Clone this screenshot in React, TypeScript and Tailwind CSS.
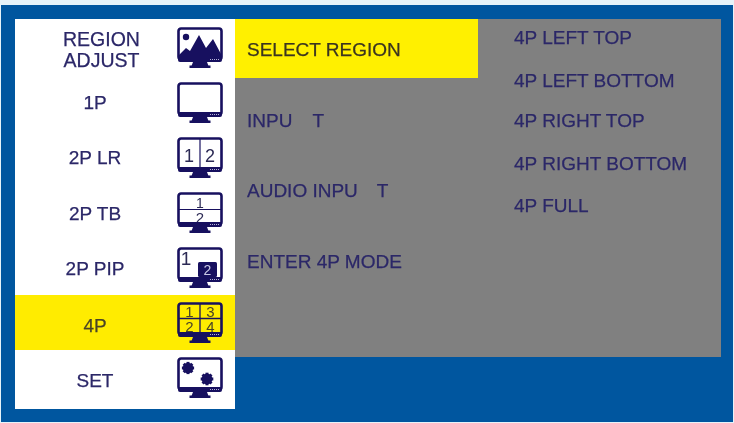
import type { ReactNode } from "react";

const NAVY = "#17105f";
const NUM = "fill-[#2c2a55]";

function Monitor({ children }: { children?: ReactNode }) {
  return (
    <svg width="46" height="42" viewBox="0 0 46 42" className="block shrink-0">
      <rect x="1.5" y="1.5" width="43" height="31" rx="2.5" fill="none" stroke={NAVY} strokeWidth="2.6" />
      {children}
      <rect x="1" y="30" width="44" height="5" rx="2" fill={NAVY} />
      <path d="M16 35h14l1.5 4h-17z" fill={NAVY} />
      <rect x="12.5" y="38.5" width="21" height="2.5" fill={NAVY} />
      <path d="M33 32.5h9" stroke="#c9c6e6" strokeWidth="0.9" strokeDasharray="1 1" />
    </svg>
  );
}

function Landscape() {
  return (
    <Monitor>
      <circle cx="9" cy="10" r="3.2" fill={NAVY} />
      <path d="M2 32 L2 28 L9 21 L13 24 L22 8 L29 21 L36 12 L44 27 L44 32 Z" fill={NAVY} />
    </Monitor>
  );
}
function TwoLR() {
  return (
    <Monitor>
      <path d="M23 2v29" stroke={NAVY} strokeWidth="1.2" />
      <text x="12" y="25" fontSize="18" textAnchor="middle" className={NUM}>1</text>
      <text x="33" y="25" fontSize="18" textAnchor="middle" className={NUM}>2</text>
    </Monitor>
  );
}
function TwoTB() {
  return (
    <Monitor>
      <path d="M2 17.5h42" stroke={NAVY} strokeWidth="1.2" />
      <text x="23" y="15.5" fontSize="14" textAnchor="middle" className={NUM}>1</text>
      <text x="23" y="30.5" fontSize="15" textAnchor="middle" className={NUM}>2</text>
    </Monitor>
  );
}
function Pip() {
  return (
    <Monitor>
      <text x="9" y="18" fontSize="19" textAnchor="middle" className={NUM}>1</text>
      <rect x="21" y="15" width="19" height="15" rx="1.5" fill={NAVY} />
      <text x="30.5" y="28" fontSize="14" textAnchor="middle" className="fill-[#c9c8e6]">2</text>
    </Monitor>
  );
}
function Quad() {
  return (
    <Monitor>
      <path d="M23 2v29M2 16.5h42" stroke={NAVY} strokeWidth="1.3" />
      <text x="12.5" y="15" fontSize="15" textAnchor="middle" className="fill-[#4a4426]">1</text>
      <text x="33.5" y="15" fontSize="15" textAnchor="middle" className="fill-[#4a4426]">3</text>
      <text x="12.5" y="30" fontSize="15" textAnchor="middle" className="fill-[#4a4426]">2</text>
      <text x="33.5" y="30" fontSize="15" textAnchor="middle" className="fill-[#4a4426]">4</text>
    </Monitor>
  );
}
function Gear({ cx, cy, r }: { cx: number; cy: number; r: number }) {
  return (
    <g fill={NAVY}>
      <circle cx={cx} cy={cy} r={r} />
      {[0, 45, 90, 135].map((a) => (
        <rect key={a} x={cx - r - 0.9} y={cy - 1.5} width={2 * r + 1.8} height="3" transform={`rotate(${a} ${cx} ${cy})`} />
      ))}
    </g>
  );
}
function Gears() {
  return (
    <Monitor>
      <Gear cx={11} cy={11} r={5.2} />
      <Gear cx={30} cy={22} r={5.4} />
    </Monitor>
  );
}

const MENU = [
  { label: <span className="pl-[13px] pt-[4px] text-[19.5px]">REGION<br />ADJUST</span>, icon: <Landscape /> },
  { label: "1P", icon: <Monitor /> },
  { label: "2P LR", icon: <TwoLR /> },
  { label: <span className="pt-[2px]">2P TB</span>, icon: <TwoTB /> },
  { label: <span className="pt-[2px]">2P PIP</span>, icon: <Pip /> },
  { label: <span className="pt-[5px] text-[#4a4426]">4P</span>, icon: <Quad />, active: true },
  { label: <span className="pt-[5px]">SET</span>, icon: <Gears /> },
];

const SIDE = [
  { text: "4P LEFT TOP", cls: "" },
  { text: "4P LEFT BOTTOM", cls: "mt-[7px]" },
  { text: "4P RIGHT TOP", cls: "mt-[4px]" },
  { text: "4P RIGHT BOTTOM", cls: "mt-[7px]" },
  { text: "4P FULL", cls: "mt-[6px]" },
];

export default function App() {
  return (
    <div className="h-[423px] w-[734px] overflow-hidden bg-[#e6f3f9] pt-[5px] pl-px pr-px pb-px font-['Liberation_Sans',Arial,sans-serif] text-[19px] leading-[21px] text-[#2b2768] blur-[0.4px] [-webkit-text-stroke:0.25px_currentColor]">
      <div className="flex h-[417px] w-[732px] items-start bg-[#00569f] pt-[14px] pl-[14px] pr-[12px]">
        <div className="flex h-[390px] w-[220px] flex-col bg-white pt-px">
          {MENU.map((r, i) => (
            <div
              key={i}
              className={`flex h-[55px] w-[221px] shrink-0 items-center ${r.active ? "bg-[#ffec00]" : ""}`}
            >
              <div className="mr-[2px] flex w-[160px] justify-center text-center">{r.label}</div>
              {r.icon}
            </div>
          ))}
        </div>
        <div className="flex h-[338px] w-[486px] bg-[#808080]">
          <div className="w-[279px]">
            <div className="flex h-[59px] w-[243px] items-center bg-[#fff000] pl-[12px] pt-[2px] text-[#3b3520]">
              SELECT REGION
            </div>
            <div className="mt-[7px] flex h-[70px] items-center pl-[12px]">
              INPU<span className="ml-[20px]">T</span>
            </div>
            <div className="flex h-[70px] items-center pl-[12px]">
              AUDIO INPU<span className="ml-[19px]">T</span>
            </div>
            <div className="flex h-[70px] items-center pl-[12px] pt-[2px]">ENTER 4P MODE</div>
          </div>
          <div className="flex flex-col">
            {SIDE.map((s) => (
              <div key={s.text} className={`flex h-[36px] items-center ${s.cls}`}>
                {s.text}
              </div>
            ))}
          </div>
        </div>
      </div>
    </div>
  );
}
